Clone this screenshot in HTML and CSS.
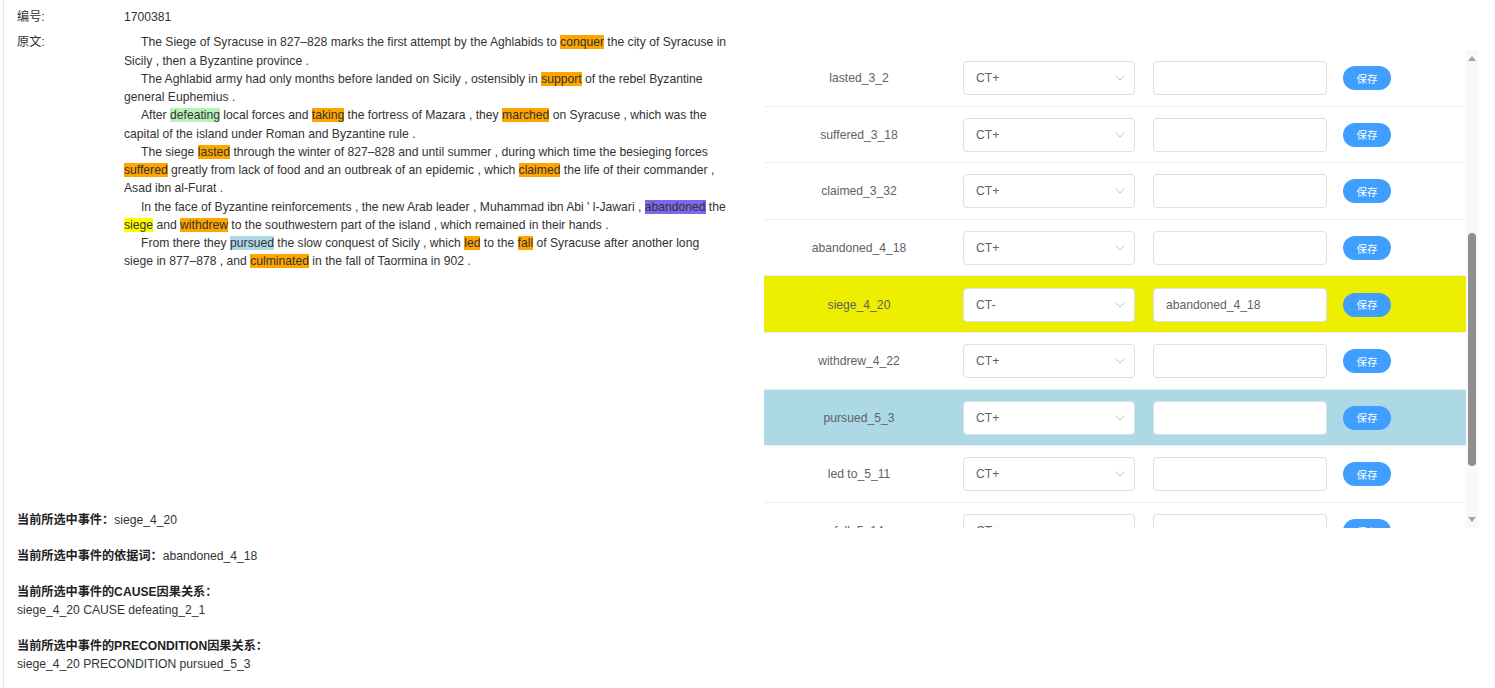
FILE: index.html
```html
<!DOCTYPE html>
<html lang="zh">
<head>
<meta charset="utf-8">
<title>事件标注</title>
<link rel="stylesheet" href="styles.css">
</head>
<body>
<div class="page">
  <div class="left">
    <div class="meta">
      <div class="field">
        <div class="label">编号:</div>
        <div class="value">1700381</div>
      </div>
      <div class="field field-doc">
        <div class="label">原文:</div>
        <div class="value doc">
          <p>The Siege of Syracuse in 827–828 marks the first attempt by the Aghlabids to <span class="hl orange">conquer</span> the city of Syracuse in Sicily , then a Byzantine province .</p>
          <p>The Aghlabid army had only months before landed on Sicily , ostensibly in <span class="hl orange">support</span> of the rebel Byzantine general Euphemius .</p>
          <p>After <span class="hl green">defeating</span> local forces and <span class="hl orange">taking</span> the fortress of Mazara , they <span class="hl orange">marched</span> on Syracuse , which was the capital of the island under Roman and Byzantine rule .</p>
          <p>The siege <span class="hl orange">lasted</span> through the winter of 827–828 and until summer , during which time the besieging forces <span class="hl orange">suffered</span> greatly from lack of food and an outbreak of an epidemic , which <span class="hl orange">claimed</span> the life of their commander , Asad ibn al-Furat .</p>
          <p>In the face of Byzantine reinforcements , the new Arab leader , Muhammad ibn Abi ' l-Jawari , <span class="hl purple">abandoned</span> the <span class="hl yellow">siege</span> and <span class="hl orange">withdrew</span> to the southwestern part of the island , which remained in their hands .</p>
          <p>From there they <span class="hl blue">pursued</span> the slow conquest of Sicily , which <span class="hl orange">led</span> to the <span class="hl orange">fall</span> of Syracuse after another long siege in 877–878 , and <span class="hl orange">culminated</span> in the fall of Taormina in 902 .</p>
        </div>
      </div>
    </div>
    <div class="info">
      <div class="info-group"><span class="k">当前所选中事件：</span>siege_4_20</div>
      <div class="info-group"><span class="k">当前所选中事件的依据词：</span>abandoned_4_18</div>
      <div class="info-group"><div class="k">当前所选中事件的CAUSE因果关系：</div><div>siege_4_20 CAUSE defeating_2_1</div></div>
      <div class="info-group"><div class="k">当前所选中事件的PRECONDITION因果关系：</div><div>siege_4_20 PRECONDITION pursued_5_3</div></div>
    </div>
  </div>

  <div class="right">
    <div class="table">
      <div class="row">
        <div class="cell c-name">lasted_3_2</div>
        <div class="cell c-sel"><div class="select"><span>CT+</span><svg class="chev" viewBox="0 0 10 6"><polyline points="0.5,0.5 5,5 9.5,0.5"/></svg></div></div>
        <div class="cell c-inp"><div class="input"></div></div>
        <div class="cell c-btn"><button class="btn">保存</button></div>
      </div>
      <div class="row">
        <div class="cell c-name">suffered_3_18</div>
        <div class="cell c-sel"><div class="select"><span>CT+</span><svg class="chev" viewBox="0 0 10 6"><polyline points="0.5,0.5 5,5 9.5,0.5"/></svg></div></div>
        <div class="cell c-inp"><div class="input"></div></div>
        <div class="cell c-btn"><button class="btn">保存</button></div>
      </div>
      <div class="row">
        <div class="cell c-name">claimed_3_32</div>
        <div class="cell c-sel"><div class="select"><span>CT+</span><svg class="chev" viewBox="0 0 10 6"><polyline points="0.5,0.5 5,5 9.5,0.5"/></svg></div></div>
        <div class="cell c-inp"><div class="input"></div></div>
        <div class="cell c-btn"><button class="btn">保存</button></div>
      </div>
      <div class="row">
        <div class="cell c-name">abandoned_4_18</div>
        <div class="cell c-sel"><div class="select"><span>CT+</span><svg class="chev" viewBox="0 0 10 6"><polyline points="0.5,0.5 5,5 9.5,0.5"/></svg></div></div>
        <div class="cell c-inp"><div class="input"></div></div>
        <div class="cell c-btn"><button class="btn">保存</button></div>
      </div>
      <div class="row row-yellow">
        <div class="cell c-name">siege_4_20</div>
        <div class="cell c-sel"><div class="select"><span>CT-</span><svg class="chev" viewBox="0 0 10 6"><polyline points="0.5,0.5 5,5 9.5,0.5"/></svg></div></div>
        <div class="cell c-inp"><div class="input">abandoned_4_18</div></div>
        <div class="cell c-btn"><button class="btn">保存</button></div>
      </div>
      <div class="row">
        <div class="cell c-name">withdrew_4_22</div>
        <div class="cell c-sel"><div class="select"><span>CT+</span><svg class="chev" viewBox="0 0 10 6"><polyline points="0.5,0.5 5,5 9.5,0.5"/></svg></div></div>
        <div class="cell c-inp"><div class="input"></div></div>
        <div class="cell c-btn"><button class="btn">保存</button></div>
      </div>
      <div class="row row-blue">
        <div class="cell c-name">pursued_5_3</div>
        <div class="cell c-sel"><div class="select"><span>CT+</span><svg class="chev" viewBox="0 0 10 6"><polyline points="0.5,0.5 5,5 9.5,0.5"/></svg></div></div>
        <div class="cell c-inp"><div class="input"></div></div>
        <div class="cell c-btn"><button class="btn">保存</button></div>
      </div>
      <div class="row">
        <div class="cell c-name">led to_5_11</div>
        <div class="cell c-sel"><div class="select"><span>CT+</span><svg class="chev" viewBox="0 0 10 6"><polyline points="0.5,0.5 5,5 9.5,0.5"/></svg></div></div>
        <div class="cell c-inp"><div class="input"></div></div>
        <div class="cell c-btn"><button class="btn">保存</button></div>
      </div>
      <div class="row">
        <div class="cell c-name">fall_5_14</div>
        <div class="cell c-sel"><div class="select"><span>CT+</span><svg class="chev" viewBox="0 0 10 6"><polyline points="0.5,0.5 5,5 9.5,0.5"/></svg></div></div>
        <div class="cell c-inp"><div class="input"></div></div>
        <div class="cell c-btn"><button class="btn">保存</button></div>
      </div>
      <div class="row">
        <div class="cell c-name">culminated_6_20</div>
        <div class="cell c-sel"><div class="select"><span>CT+</span><svg class="chev" viewBox="0 0 10 6"><polyline points="0.5,0.5 5,5 9.5,0.5"/></svg></div></div>
        <div class="cell c-inp"><div class="input"></div></div>
        <div class="cell c-btn"><button class="btn">保存</button></div>
      </div>
    </div>
    <div class="scrollbar">
      <div class="sb-btn"><svg viewBox="0 0 8 5"><polygon points="0,5 4,0 8,5"/></svg></div>
      <div class="sb-track"><div class="sb-thumb" style="margin-top:166px;height:233px"></div></div>
      <div class="sb-btn"><svg viewBox="0 0 8 5"><polygon points="0,0 8,0 4,5"/></svg></div>
    </div>
  </div>
</div>
</body>
</html>
```

FILE: styles.css
```css
* {
  box-sizing: border-box;
}

body {
  margin: 0;
  background: #ffffff;
  color: #333333;
  font-family: "Liberation Sans", Arial, "Noto Sans CJK SC", sans-serif;
  font-size: 12.15px;
}

.page {
  display: flex;
  margin-left: 3px;
  padding-left: 13px;
  border-left: 1px solid #e8e8e8;
  min-height: 688px;
}

.left {
  width: 747px;
  flex: none;
}

.meta {
  height: 511px;
  padding-top: 8px;
}

.field {
  display: flex;
  line-height: 18.25px;
}

.field-doc {
  margin-top: 7px;
}

.label {
  width: 107px;
  flex: none;
}

.doc {
  width: 606px;
}

.doc p {
  margin: 0;
  text-indent: 17px;
}

.hl.orange { background: #ffa500; }
.hl.green { background: #b8f2b8; }
.hl.purple { background: #7b68ee; }
.hl.yellow { background: #ffff00; }
.hl.blue { background: #add8e6; }

.info {
  line-height: 18.25px;
}

.info-group {
  margin-bottom: 17.5px;
}

.info .k {
  font-weight: bold;
  color: #222222;
}

.right {
  display: flex;
  margin-top: 50px;
  height: 478px;
  width: 714px;
  flex: none;
}

.table {
  width: 702px;
  overflow: hidden;
}

.row {
  display: flex;
  align-items: center;
  height: 56.6px;
  padding-top: 1px;
  border-bottom: 1px solid #ebeef5;
  color: #606266;
}

.row-yellow {
  background: #eeee00;
}

.row-blue {
  background: #add8e6;
}

.cell {
  flex: none;
}

.c-name {
  width: 190px;
  text-align: center;
}

.c-sel {
  width: 191px;
  padding: 0 10px 0 9px;
}

.c-inp {
  width: 191px;
  padding: 0 9px 0 8px;
}

.c-btn {
  width: 130px;
  padding-left: 7px;
}

.select,
.input {
  display: flex;
  align-items: center;
  height: 34px;
  background: #ffffff;
  border: 1px solid #dcdfe6;
  border-radius: 4px;
  padding: 0 12px;
  color: #606266;
}

.select {
  justify-content: space-between;
  padding-right: 9px;
}

.chev {
  width: 10px;
  height: 6px;
  fill: none;
  stroke: #c0c4cc;
  stroke-width: 1;
}

.btn {
  width: 48px;
  height: 24px;
  border: none;
  border-radius: 12px;
  background: #409eff;
  color: #ffffff;
  font-family: "Noto Sans CJK SC", sans-serif;
  font-size: 10.5px;
  padding: 0;
}

.scrollbar {
  width: 12px;
  display: flex;
  flex-direction: column;
  background: #f8f8f8;
}

.sb-btn {
  height: 17px;
  display: flex;
  align-items: center;
  justify-content: center;
}

.sb-btn svg {
  width: 8px;
  height: 5px;
  fill: #a3a3a3;
}

.sb-track {
  flex: 1;
  padding: 0 2px;
}

.sb-thumb {
  background: #8f8f8f;
  border-radius: 4px;
}
```
